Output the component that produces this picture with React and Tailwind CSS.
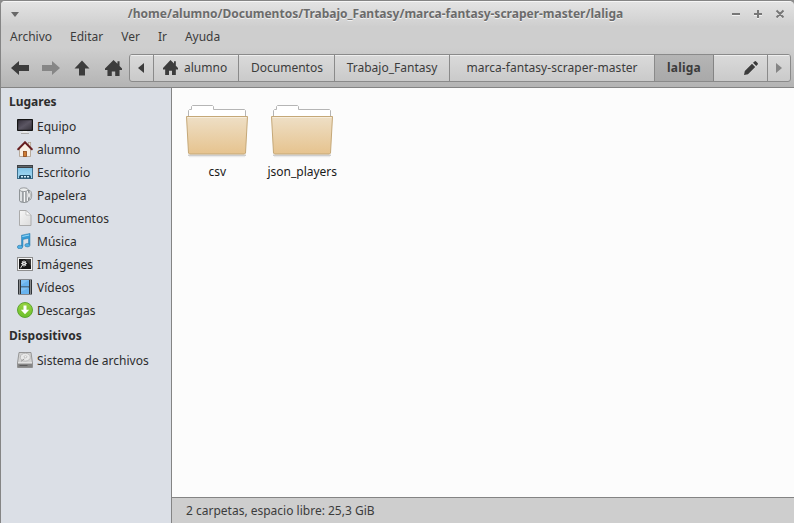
import React from "react";

function HomeGlyph({ className }) {
  return (
    <svg viewBox="0 0 18 16" preserveAspectRatio="none" className={className} fill="#3c3c3c">
      <path d="M9 0 0 8.6V10h2.6v6h4.6v-4.6h3.6V16h4.6v-6H18V8.6l-2.6-2.5V1.2h-2.2v2.6z" />
    </svg>
  );
}

function ArrowGlyph({ className, color }) {
  return (
    <svg viewBox="0 0 18 16" className={className} fill={color}>
      <path d="M0 8 8 1v4H18v6H8v4z" />
    </svg>
  );
}

function ComputerIcon() {
  return (
    <svg viewBox="0 0 16 16" className="size-4">
      <defs>
        <linearGradient id="screen" x1="0" y1="0" x2="1" y2="1">
          <stop offset="0" stopColor="#37323d" />
          <stop offset="0.5" stopColor="#5b5663" />
          <stop offset="1" stopColor="#38343c" />
        </linearGradient>
      </defs>
      <rect x="0" y="1" width="16" height="12" rx="0.8" fill="#151515" />
      <rect x="1.2" y="2.2" width="13.6" height="9.6" fill="url(#screen)" />
      <path d="M6 13h4v1h1.5l.8 1.5H3.7L4.5 14H6z" fill="#efefef" />
      <path d="M4 15.4h8" stroke="#a5a5a5" />
    </svg>
  );
}

function HouseIcon() {
  return (
    <svg viewBox="0 0 16 16" className="size-4">
      <rect x="11.3" y="1.5" width="2.4" height="5" fill="#eee2d2" stroke="#a99c8b" strokeWidth="0.7" />
      <path d="M2.5 7.5 8 1.8l5.5 5.7v8h-11z" fill="#f8efe3" stroke="#ab9b88" strokeWidth="0.8" />
      <path d="M1.2 8.3 8 1.3l6.8 7" fill="none" stroke="#681f20" strokeWidth="2" strokeLinecap="round" />
      <rect x="6.5" y="10.5" width="3" height="5" fill="#ce7b32" stroke="#8d4a19" strokeWidth="0.8" />
    </svg>
  );
}

function DesktopIcon() {
  return (
    <svg viewBox="0 0 16 16" className="size-4">
      <defs>
        <linearGradient id="desk" x1="0" y1="0" x2="0" y2="1">
          <stop offset="0" stopColor="#78bde2" />
          <stop offset="1" stopColor="#a8dcf5" />
        </linearGradient>
      </defs>
      <rect x="0.5" y="1.5" width="15" height="13" fill="url(#desk)" stroke="#3c6f8c" />
      <path d="M0 1h16v3H0z" fill="#3d4145" />
      <path d="M1 2.5h14" stroke="#62676b" />
      <path d="M2 14.5v-2L3 11h10l1 1.5v2z" fill="#25516c" />
      <path d="M4 12.8h2M7 12.8h2M10 12.8h2" stroke="#d3effc" strokeWidth="1.5" />
    </svg>
  );
}

function TrashIcon() {
  return (
    <svg viewBox="0 0 16 16" className="size-4">
      <path d="M2.5 3v10.5c0 1.2 2 2 4.5 2s4.5-.8 4.5-2V3z" fill="#b9bdc0" stroke="#808588" strokeWidth="0.8" />
      <path d="M4 4v10M7.5 5v10M10.3 4v10" stroke="#f7f8f8" strokeWidth="1.2" />
      <path d="M5.8 5v10M9 5v10" stroke="#85898c" strokeWidth="0.8" />
      <ellipse cx="6.8" cy="2.7" rx="4.2" ry="1.9" fill="#eceeee" stroke="#85898c" strokeWidth="0.8" />
      <path d="M11.5 3.5H13c1.3 1 1.7 2.5 1.7 4.5s-.4 3.8-1.7 5h-1.5c1-1 1.4-2.5 1.4-4.8s-.4-3.700-1.400-4.700z" fill="#e0e3e4" stroke="#85898c" strokeWidth="0.8" />
      <ellipse cx="12" cy="8.2" rx="1.2" ry="2.8" fill="#fafafa" stroke="#9ea2a5" strokeWidth="0.6" />
    </svg>
  );
}

function DocumentIcon() {
  return (
    <svg viewBox="0 0 16 16" className="size-4">
      <defs>
        <linearGradient id="paper" x1="0" y1="0" x2="1" y2="1">
          <stop offset="0" stopColor="#f6f6f6" />
          <stop offset="1" stopColor="#dcdcdc" />
        </linearGradient>
      </defs>
      <path d="M2.5 0.5H9L14 5v10.500H2.500z" fill="url(#paper)" stroke="#ababab" />
      <path d="M9 0.7V5h5z" fill="#ffffff" stroke="#bdbdbd" strokeWidth="0.8" />
    </svg>
  );
}

function MusicIcon() {
  return (
    <svg viewBox="0 0 16 16" className="size-4">
      <path d="M4.5 2.2 13 .4v11.400h-1.500V5.300L6 6.400v7.200H4.500z" fill="#369bd6" stroke="#2a78aa" strokeWidth="0.5" />
      <path d="m5.3 2.9 6.9-1.5v1.200L5.300 4.100z" fill="#9bdaf7" />
      <ellipse cx="3" cy="14" rx="2.7" ry="1.8" fill="#4fb0e5" stroke="#2a78aa" strokeWidth="0.6" />
      <ellipse cx="10.4" cy="12.2" rx="2.6" ry="1.7" fill="#4fb0e5" stroke="#2a78aa" strokeWidth="0.6" />
    </svg>
  );
}

function ImageIcon() {
  return (
    <svg viewBox="0 0 16 16" className="size-4">
      <rect x="0.5" y="1.5" width="15" height="13" fill="#f5f5f5" stroke="#8e8e8e" />
      <rect x="2" y="3" width="12" height="10" fill="#161616" />
      <path d="M8 3h6v7z" fill="#383838" />
      <path d="M7 4.500v6M4.200 7.500h5.600M5 5.500l4 4M9 5.500l-4 4" stroke="#e9e9e9" strokeWidth="1.1" />
      <circle cx="7" cy="7.5" r="0.8" fill="#555" />
      <path d="m5 9.400-1.500 2.900" stroke="#ddd" />
    </svg>
  );
}

function VideoIcon() {
  return (
    <svg viewBox="0 0 16 16" className="size-4">
      <rect x="1" y="0.5" width="14" height="15" fill="#303438" />
      <path d="M4 1h8v6.500H4z" fill="#68b3ee" />
      <path d="M4 8.500h8V15H4z" fill="#68b3ee" />
      <path d="M4 1h8L4 6zM4 8.500h8L4 13z" fill="#7fc1f4" />
      <path d="M2.500 1.500v14M13.500 1.500v14" stroke="#e4e4e4" strokeWidth="1" strokeDasharray="1 1" />
    </svg>
  );
}

function DownloadIcon() {
  return (
    <svg viewBox="0 0 16 16" className="size-4">
      <defs>
        <linearGradient id="green" x1="0" y1="0" x2="0" y2="1">
          <stop offset="0" stopColor="#98d340" />
          <stop offset="1" stopColor="#6cc02c" />
        </linearGradient>
      </defs>
      <circle cx="8" cy="8" r="7.5" fill="url(#green)" stroke="#559f28" strokeWidth="0.9" />
      <path d="M6.500 3.500h3v4.200h2.700L8 12.300 3.800 7.700h2.700z" fill="#fff" />
    </svg>
  );
}

function DriveIcon() {
  return (
    <svg viewBox="0 0 16 16" className="size-4">
      <path d="M2 0.5h12L15.500 11v4.500H.5V11z" fill="#d2d2d2" stroke="#8f8f8f" strokeWidth="0.9" />
      <ellipse cx="8.3" cy="5.2" rx="5" ry="3.9" fill="#e9e9e9" stroke="#b3b3b3" strokeWidth="0.8" />
      <ellipse cx="8.5" cy="4.8" rx="1.4" ry="1" fill="#fff" stroke="#a2a2a2" strokeWidth="0.6" />
      <path d="m4 9.300 3.300-2.400" stroke="#999" />
      <path d="M.8 11h14.400v4.400H.8z" fill="#858585" />
      <path d="M1 11h14" stroke="#f2f2f2" />
      <path d="M2.500 13.500h8" stroke="#5c5c5c" />
    </svg>
  );
}

const places = [
  ["Equipo", ComputerIcon],
  ["alumno", HouseIcon],
  ["Escritorio", DesktopIcon],
  ["Papelera", TrashIcon],
  ["Documentos", DocumentIcon],
  ["Música", MusicIcon],
  ["Imágenes", ImageIcon],
  ["Vídeos", VideoIcon],
  ["Descargas", DownloadIcon],
];

function Place({ label, Icon }) {
  return (
    <div className="flex h-[23px] items-center gap-1 pb-px pl-4">
      <Icon />
      <span className="mt-px">{label}</span>
    </div>
  );
}

function Folder({ name }) {
  return (
    <div className="flex w-[85px] flex-col items-center">
      <svg viewBox="0 0 64 54" className="mr-px h-[54px] w-16">
        <defs>
          <linearGradient id="folder" x1="0" y1="0" x2="0" y2="1">
            <stop offset="0" stopColor="#eedfc6" />
            <stop offset="1" stopColor="#e6c38e" />
          </linearGradient>
        </defs>
        <path d="M3 49.500h58V51H3z" fill="#000" opacity="0.18" />
        <path d="M4 51h56v1.200H4z" fill="#000" opacity="0.07" />
        <path d="M3.500 12V5.500l1-1h2v-3l1-1h20l1 1v3h31l1 1V12z" fill="#fff" stroke="#b5b5b5" />
        <path d="M1.500 11.500h61l-2 36.500-1 1h-55l-1-1z" fill="url(#folder)" stroke="#c5a878" />
        <path d="M2.500 12.500h59" stroke="#f7eddb" />
      </svg>
      <span className="mt-1 whitespace-nowrap pr-[0.5px] leading-[18px] text-[#1a1a1a]">{name}</span>
    </div>
  );
}

function Crumb({ className, children }) {
  return (
    <div className={"flex items-center border-r border-[#8a8a8a] shadow-[inset_0_1px_0_#eeeeee] " + className}>
      {children}
    </div>
  );
}

export default function App() {
  return (
    <div className="h-[523px] w-[794px] overflow-hidden bg-[#8c8c8c] font-['Noto_Sans',sans-serif] text-[12px] leading-[18px] text-[#2d2d2d]">
      <div className="flex h-full flex-col overflow-hidden rounded-t-[5px] border-l border-t border-[#858585] bg-[#cecece]">
        <header className="flex h-[25px] shrink-0 items-center border-t border-[#f6f6f6] bg-linear-to-b from-[#e3e3e3] to-[#cfcfcf] pl-[10px] pr-[10px]">
          <svg viewBox="0 0 8 5" className="h-[5px] w-2" fill="#686868">
            <path d="M0 0h8L4 5z" />
          </svg>
          <h1 className="flex-1 whitespace-nowrap pl-px text-center font-bold text-[#6b6b6b] [text-shadow:0_1px_0_#f2f2f2]">
            /home/alumno/Documentos/Trabajo_Fantasy/marca-fantasy-scraper-master/laliga
          </h1>
          <svg viewBox="0 0 53 10" className="h-[10px] w-[53px]" fill="none" strokeWidth="2">
            <path d="M1 6h8M23 6h8M27 2v8M45.500 2l7 7M52.500 2l-7 7" stroke="#f2f2f2" />
            <path d="M1 5h8M23 5h8M27 1v8M45.500 1.500l7 7M52.500 1.500l-7 7" stroke="#777" />
          </svg>
        </header>

        <nav className="flex h-[22px] shrink-0 items-center gap-[18px] pl-[9px] text-[#3c3c3c]">
          <span>Archivo</span>
          <span>Editar</span>
          <span>Ver</span>
          <span>Ir</span>
          <span>Ayuda</span>
        </nav>

        <div className="flex h-[40px] shrink-0 items-center border-b border-[#848484] bg-linear-to-b from-[#cecece] to-[#b4b4b4] pl-[10px] pr-[3px]">
          <ArrowGlyph className="h-4 w-[18px]" color="#3c3c3c" />
          <ArrowGlyph className="ml-[13px] h-4 w-[18px] rotate-180" color="#868686" />
          <svg viewBox="0 0 16 16" className="ml-[13.5px] size-4" fill="#3c3c3c">
            <path d="M8 0.500 0.500 8.500H5V15.500h6V8.500h4.500z" />
          </svg>
          <HomeGlyph className="ml-[15px] h-4 w-[17px]" />
          <div className="ml-[7.5px] flex h-[28px] flex-1 overflow-hidden rounded-[3px] border border-[#8a8a8a] bg-linear-to-b from-[#dadada] to-[#cacaca] text-[#3c3c3c]">
            <Crumb className="w-[24px] justify-center pr-px">
              <svg viewBox="0 0 6 10" className="h-[10px] w-[6px]" fill="#3c3c3c">
                <path d="M6 0v10L0 5z" />
              </svg>
            </Crumb>
            <Crumb className="w-[85px] gap-[6px] pl-[9px]">
              <HomeGlyph className="h-[15px] w-[15px]" />
              <span>alumno</span>
            </Crumb>
            <Crumb className="w-[96px] justify-center pl-px">Documentos</Crumb>
            <Crumb className="w-[115px] justify-center">Trabajo_Fantasy</Crumb>
            <Crumb className="w-[205px] justify-center tracking-[0.05px]">marca-fantasy-scraper-master</Crumb>
            <div className="flex w-[59px] items-center justify-center border-r border-[#848484] bg-linear-to-b from-[#b5b5b5] to-[#a9a9a9] font-bold tracking-[0.2px]">
              laliga
            </div>
            <Crumb className="w-[54px] justify-center pl-[20px]">
              <svg viewBox="0 0 14 14" className="size-[14px]" fill="#3c3c3c">
                <path d="M0 14 .8 10 8 2.800 11.200 6 4 13.200zM9 1.800 10.500.4q.8-.7 1.600 0l1.500 1.500q.7.8 0 1.600L12.200 5z" />
              </svg>
            </Crumb>
            <div className="flex flex-1 items-center justify-center shadow-[inset_0_1px_0_#eeeeee]">
              <svg viewBox="0 0 6 10" className="h-[10px] w-[6px]" fill="#858585">
                <path d="M0 0v10l6-5z" />
              </svg>
            </div>
          </div>
        </div>

        <div className="flex min-h-0 flex-1">
          <aside className="w-[171px] shrink-0 border-r border-[#848484] bg-[#dbdfe6] pt-[2px]">
            <h2 className="flex h-[25px] items-center pb-[2px] pl-2 font-bold">Lugares</h2>
            {places.map(([label, Icon]) => (
              <Place key={label} label={label} Icon={Icon} />
            ))}
            <h2 className="flex h-[27px] items-center pl-2 font-bold tracking-[0.04px]">Dispositivos</h2>
            <Place label="Sistema de archivos" Icon={DriveIcon} />
          </aside>
          <div className="flex min-w-0 flex-1 flex-col">
            <main className="flex flex-1 bg-[#fcfcfc] pl-[3px] pt-[17px]">
              <Folder name="csv" />
              <Folder name="json_players" />
            </main>
            <footer className="flex h-[26px] items-center border-t border-[#848484] bg-[#cecece] pl-[14px] text-[#3c3c3c]">
              2 carpetas, espacio libre: 25,3 GiB
            </footer>
          </div>
        </div>
      </div>
    </div>
  );
}
